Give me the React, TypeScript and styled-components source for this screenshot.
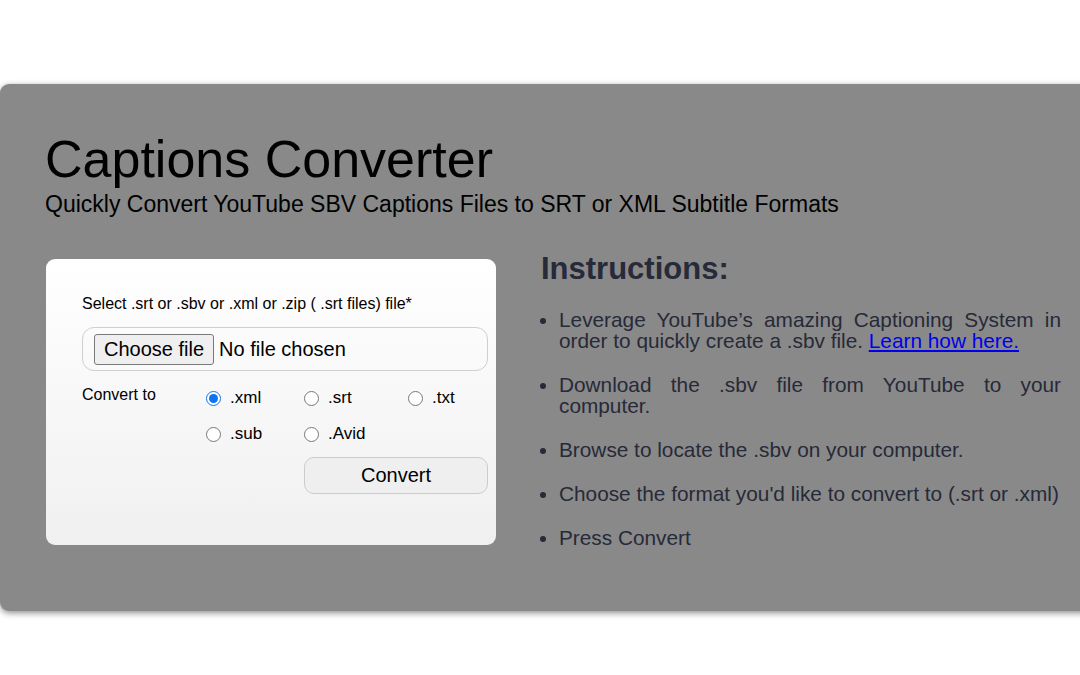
import styled, {createGlobalStyle} from "styled-components";
import {useState} from "react";

const GlobalStyle = createGlobalStyle`
  html, body {
    margin: 0;
    padding: 0;
    background: #ffffff;
    overflow: hidden;
  }
  body {
    font-family: "Liberation Sans", Arial, Helvetica, sans-serif;
  }
`;

const formats = [".xml", ".srt", ".txt", ".sub", ".Avid"];

const steps = [
  {
    text: "Leverage YouTube’s amazing Captioning System in order to quickly create a .sbv file. ",
    link: "Learn how here.",
  },
  {text: "Download the .sbv file from YouTube to your computer."},
  {text: "Browse to locate the .sbv on your computer."},
  {text: "Choose the format you'd like to convert to (.srt or .xml)"},
  {text: "Press Convert"},
];

const App = () => {
  const [format, setFormat] = useState(".xml");

  return (
    <>
      <GlobalStyle />
      <Page>
        <Panel>
          <Title>Captions Converter</Title>
          <Subtitle>
            Quickly Convert YouTube SBV Captions Files to SRT or XML Subtitle Formats
          </Subtitle>
          <Content>
            <FormCard>
              <FieldLabel>Select .srt or .sbv or .xml or .zip ( .srt files) file*</FieldLabel>
              <FileBox>
                <ChooseButton type="button">Choose file</ChooseButton>
                <FileName>No file chosen</FileName>
              </FileBox>
              <ConvertRow>
                <FieldLabel>Convert to</FieldLabel>
                <RadioGrid>
                  {formats.map(f => (
                    <RadioOption key={f}>
                      <Radio
                        type="radio"
                        name="format"
                        checked={format === f}
                        onChange={() => setFormat(f)}
                      />
                      {f}
                    </RadioOption>
                  ))}
                </RadioGrid>
              </ConvertRow>
              <ConvertButton type="button">Convert</ConvertButton>
            </FormCard>
            <Instructions>
              <Heading>Instructions:</Heading>
              <Steps>
                {steps.map(step => (
                  <Step key={step.text}>
                    {step.text}
                    {step.link ? <a href="#">{step.link}</a> : null}
                  </Step>
                ))}
              </Steps>
            </Instructions>
          </Content>
        </Panel>
      </Page>
    </>
  );
};

const Page = styled.div`
  padding-top: 84px;
  height: 675px;
  box-sizing: border-box;
`;

const Panel = styled.div`
  width: 1110px;
  height: 527px;
  box-sizing: border-box;
  padding: 50px 0 0 45px;
  background: #898989;
  border-radius: 9px;
  box-shadow: 0 2px 6px rgba(0, 0, 0, 0.45);
`;

const Title = styled.h1`
  margin: 0;
  font-size: 52px;
  line-height: 50px;
  font-weight: normal;
  color: #000;
`;

const Subtitle = styled.p`
  margin: 7px 0 0;
  font-size: 23px;
  line-height: 26px;
  color: #000;
`;

const Content = styled.div`
  display: flex;
  align-items: flex-start;
  gap: 45px;
  margin-top: 42px;
  padding-left: 1px;
`;

const FormCard = styled.form`
  width: 450px;
  height: 286px;
  box-sizing: border-box;
  padding: 36px 8px 0 36px;
  border-radius: 9px;
  background: linear-gradient(180deg, #ffffff 0%, #f0f0f0 100%);
  display: flex;
  flex-direction: column;
  align-items: flex-start;
`;

const FieldLabel = styled.label`
  font-size: 16px;
  line-height: 18px;
  color: #000;
`;

const FileBox = styled.div`
  margin-top: 14px;
  width: 406px;
  height: 44px;
  box-sizing: border-box;
  border: 1px solid #cfcfcf;
  border-radius: 12px;
  display: flex;
  align-items: center;
  padding-left: 11px;
  gap: 5px;
`;

const ChooseButton = styled.button`
  height: 31px;
  padding: 0 9px;
  font-family: inherit;
  font-size: 20px;
  color: #000;
  background: #efefef;
  border: 1px solid #7a7a7a;
  border-radius: 3px;
`;

const FileName = styled.span`
  font-size: 20px;
  color: #000;
`;

const ConvertRow = styled.div`
  margin-top: 15px;
  display: grid;
  grid-template-columns: 124px auto;
  align-items: start;
`;

const RadioGrid = styled.div`
  display: grid;
  grid-template-columns: 98px 104px auto;
  row-gap: 14px;
  padding-top: 1px;
`;

const RadioOption = styled.label`
  display: flex;
  align-items: center;
  gap: 9px;
  font-size: 17px;
  line-height: 22px;
  color: #000;
`;

const Radio = styled.input`
  margin: 0;
  width: 15px;
  height: 15px;
  accent-color: #0a74f5;
`;

const ConvertButton = styled.button`
  margin: 12px 0 0 222px;
  width: 184px;
  height: 37px;
  font-family: inherit;
  font-size: 20px;
  color: #000;
  background: #efefef;
  border: 1px solid #cccccc;
  border-radius: 10px;
`;

const Instructions = styled.div`
  width: 520px;
  margin-top: -8px;
  color: #272a38;
`;

const Heading = styled.h2`
  margin: 0;
  font-size: 31px;
  line-height: 36px;
  font-weight: bold;
`;

const Steps = styled.ul`
  margin: 22px 0 0;
  padding-left: 18px;
`;

const Step = styled.li`
  font-size: 20.8px;
  line-height: 21px;
  text-align: justify;
  margin-bottom: 23px;

  a {
    color: #0000ee;
    text-decoration: underline;
  }
`;

export default App;
